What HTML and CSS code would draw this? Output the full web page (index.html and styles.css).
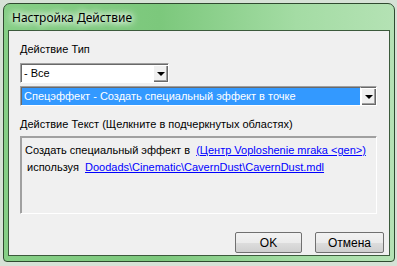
FILE: index.html
```html
<!DOCTYPE html>
<html lang="ru">
<head>
    <meta charset="UTF-8">
    <title>Настройка Действие</title>
    <link rel="stylesheet" href="styles.css">
</head>
<body>

    <div class="window">
        <div class="titlebar">Настройка Действие</div>
        <div class="client">
            <div class="label">Действие Тип</div>
            <div class="combo combo-small">
                <div class="combo-text">- Все</div>
                <div class="combo-btn"><span class="arrow"></span></div>
            </div>
            <div class="combo combo-wide">
                <div class="combo-text selected">Спецэффект - Создать специальный эффект в точке</div>
                <div class="combo-btn"><span class="arrow"></span></div>
            </div>

            <div class="label label-text">Действие Текст (Щелкните в подчеркнутых областях)</div>
            <div class="textbox">
                <p>Создать специальный эффект в &nbsp;<a href="#">(Центр Voploshenie mraka &lt;gen&gt;)</a></p>
                <p class="indent">используя &nbsp;<a href="#">Doodads\Cinematic\CavernDust\CavernDust.mdl</a></p>
            </div>

            <div class="buttons">
                <button class="btn btn-ok">OK</button>
                <button class="btn">Отмена</button>
            </div>
        </div>
    </div>

</body>
</html>
```

FILE: styles.css
```css
body {
    margin: 0;
    background-color: #d6e2d6;
    font-family: "Liberation Sans", Arial, sans-serif;
    font-size: 11px;
}
.window {
    margin: 3px 0 0 3px;
    width: 392px;
    height: 259px;
    border: 1px solid #2f4a2f;
    border-radius: 7px 7px 4px 4px;
    background: linear-gradient(90deg, #86cf86 0%, #7cc87c 40%, #a4dca4 75%, #b4e2b4 100%);
    padding: 0 4px 5px 4px;
    box-sizing: border-box;
}
.titlebar {
    height: 26px;
    line-height: 28px;
    padding-left: 4px;
    font-family: "Noto Sans", "Open Sans", sans-serif;
    font-size: 12px;
    color: #000;
    text-shadow: 0 0 6px #ffffff, 0 0 8px #ffffff, 0 0 10px #e8f8e8;
}
.client {
    border: 1px solid #3c5a3c;
    background-color: #f0f0f0;
    height: 226px;
    padding: 11px 0 0 11px;
    box-sizing: border-box;
}
.label {
    height: 14px;
    line-height: 14px;
    color: #000;
    white-space: nowrap;
}
.combo {
    display: flex;
    height: 20px;
    box-sizing: border-box;
    border-top: 1px solid #a0a0a0;
    border-left: 1px solid #a0a0a0;
    border-right: 1px solid #ffffff;
    border-bottom: 1px solid #ffffff;
    background-color: #ffffff;
}
.combo-small {
    width: 149px;
    margin-top: 7px;
}
.combo-wide {
    width: 357px;
    margin-top: 3px;
}
.combo-text {
    flex: 1;
    border-top: 1px solid #696969;
    border-left: 1px solid #696969;
    padding: 1px 0 0 2px;
    line-height: 15px;
    white-space: nowrap;
}
.combo-text.selected {
    background-color: #3399ff;
    color: #ffffff;
    border-right: 1px solid #ffffff;
    background-clip: padding-box;
}
.combo-btn {
    width: 15px;
    border-top: 1px solid #696969;
    background-color: #f0f0f0;
    box-shadow: inset 1px 1px 0 #ffffff, inset -1px -1px 0 #696969, inset -2px -2px 0 #a0a0a0;
    display: flex;
    align-items: center;
    justify-content: center;
}
.arrow {
    width: 0;
    height: 0;
    border-left: 4px solid transparent;
    border-right: 4px solid transparent;
    border-top: 4px solid #000;
    margin-top: 1px;
}
.label-text {
    margin-top: 11px;
}
.textbox {
    width: 357px;
    height: 78px;
    margin-top: 5px;
    box-sizing: border-box;
    border-top: 1px solid #a0a0a0;
    border-left: 1px solid #a0a0a0;
    border-right: 1px solid #ffffff;
    border-bottom: 1px solid #ffffff;
    box-shadow: 1px 1px 0 #a0a0a0 inset;
    padding: 5px 0 0 4px;
}
.textbox p {
    margin: 0;
    height: 17px;
    line-height: 16px;
    white-space: nowrap;
}
.textbox .indent {
    padding-left: 2px;
}
.textbox a {
    color: #0000ff;
}
.buttons {
    display: flex;
    justify-content: flex-end;
    gap: 13px;
    margin-top: 18px;
    padding-right: 5px;
}
.btn {
    font-family: "Liberation Sans", Arial, sans-serif;
    font-size: 12px;
    height: 21px;
    width: 69px;
    padding: 0;
    background: linear-gradient(#f2f2f2 0%, #ebebeb 50%, #dddddd 51%, #cfcfcf 100%);
    border: 1px solid #707070;
    border-radius: 2px;
    color: #000;
}
.btn-ok {
    width: 67px;
}
```
